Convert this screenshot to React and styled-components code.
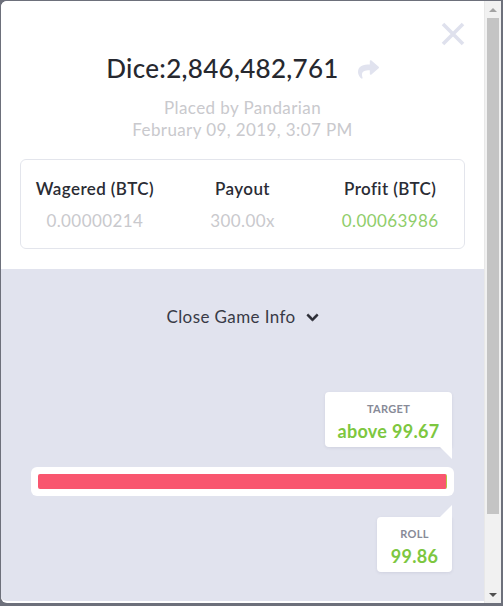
import React from "react";
import styled, { createGlobalStyle } from "styled-components";
import { FaShare, FaChevronDown } from "react-icons/fa";

const GlobalStyle = createGlobalStyle`
    html, body {
        margin: 0;
        padding: 0;
        background: #6d707b;
    }
    * {
        box-sizing: border-box;
    }
`;

const Frame = styled.div`
    display: flex;
    height: 606px;
    padding: 1px 2px 3px 1px;
    font-family: Lato, "Open Sans", sans-serif;
`;

const Panel = styled.div`
    position: relative;
    flex: 1;
    height: 602px;
    overflow: hidden;
    background: #ffffff;
    border-radius: 6px 0 0 6px;
    border-bottom: 2px solid #ffffff;
`;

/* fake window scrollbar, the headless browser hides the real one */
const ScrollBar = styled.div`
    width: 17px;
    height: 602px;
    display: flex;
    flex-direction: column;
    background: #f1f1f1;
    border-left: 1px solid #e8e8e8;
`;

const ScrollArrow = styled.div`
    height: 17px;
    display: flex;
    align-items: center;
    justify-content: center;
    &::before {
        content: "";
        border-left: 4px solid transparent;
        border-right: 4px solid transparent;
        ${({ $down }) =>
            $down
                ? "border-top: 4px solid #505050;"
                : "border-bottom: 4px solid #a3a3a3;"}
    }
`;

const ScrollThumb = styled.div`
    height: 496px;
    margin: 0 2px;
    background: #c4c4c4;
`;

const ScrollTrack = styled.div`
    flex: 1;
`;

const Header = styled.section`
    display: flex;
    flex-direction: column;
    align-items: center;
    padding: 50px 19px 20px;
    background: #ffffff;
`;

const CloseButton = styled.button`
    position: absolute;
    top: 20px;
    right: 18px;
    width: 26px;
    height: 26px;
    padding: 0;
    border: none;
    background: none;
    cursor: pointer;
    svg {
        display: block;
    }
`;

const TitleRow = styled.div`
    display: flex;
    align-items: center;
    gap: 19px;
`;

const Title = styled.h1`
    margin: 0;
    font-size: 26px;
    line-height: 34px;
    font-weight: 500;
    color: #26282f;
    letter-spacing: 0.3px;
`;

const ShareIcon = styled(FaShare)`
    color: #e1e3ef;
    font-size: 21px;
    margin-top: 2px;
`;

const Meta = styled.div`
    margin-top: 12px;
    text-align: center;
    font-size: 17px;
    line-height: 22px;
    letter-spacing: 0.4px;
    color: #c9c9cd;
`;

const StatsCard = styled.div`
    width: 100%;
    margin-top: 18px;
    display: grid;
    grid-template-columns: repeat(3, 1fr);
    padding: 18px 0 16px;
    border: 1px solid #e3e5ec;
    border-radius: 6px;
`;

const Stat = styled.div`
    display: flex;
    flex-direction: column;
    align-items: center;
    gap: 10px;
`;

const StatLabel = styled.div`
    font-size: 17px;
    line-height: 22px;
    font-weight: 600;
    letter-spacing: 0.4px;
    color: #2a2c34;
`;

const StatValue = styled.div`
    font-size: 17px;
    line-height: 22px;
    letter-spacing: 0.4px;
    color: ${({ $positive }) => ($positive ? "#8fcd6a" : "#c9c9cd")};
`;

const Details = styled.section`
    display: flex;
    flex-direction: column;
    align-items: center;
    padding: 37px 30px 120px;
    background: #e1e3ee;
`;

const ToggleButton = styled.button`
    display: flex;
    align-items: center;
    gap: 10px;
    padding: 0;
    border: none;
    background: none;
    font-family: inherit;
    font-size: 17px;
    line-height: 22px;
    letter-spacing: 0.4px;
    color: #383a46;
    cursor: pointer;
    svg {
        font-size: 13px;
        color: #2a2c34;
        stroke: #2a2c34;
        stroke-width: 30px;
    }
`;

const Slider = styled.div`
    width: 100%;
    margin-top: 64px;
    display: flex;
    flex-direction: column;
    align-items: flex-end;
`;

const Tip = styled.div`
    position: relative;
    width: ${({ $width }) => $width}px;
    margin-right: 2px;
    padding: 10px 0 0;
    height: 55px;
    display: flex;
    flex-direction: column;
    align-items: center;
    background: #ffffff;
    border-radius: ${({ $below }) => ($below ? "4px 0 4px 4px" : "4px 4px 0 4px")};
    box-shadow: 0 1px 3px rgba(80, 86, 120, 0.12);
    margin-bottom: ${({ $below }) => ($below ? 0 : 20)}px;
    margin-top: ${({ $below }) => ($below ? 21 : 0)}px;

    &::after {
        content: "";
        position: absolute;
        right: 0;
        width: 12px;
        height: 12px;
        background: #ffffff;
        ${({ $below }) =>
            $below
                ? "bottom: 100%; clip-path: polygon(100% 0, 100% 100%, 0 100%);"
                : "top: 100%; clip-path: polygon(0 0, 100% 0, 100% 100%);"}
    }
`;

const TipLabel = styled.div`
    font-size: 11px;
    line-height: 14px;
    font-weight: 700;
    color: #878a97;
    letter-spacing: 0.3px;
`;

const TipValue = styled.div`
    margin-top: 4px;
    font-size: 18px;
    line-height: 22px;
    font-weight: 700;
    letter-spacing: 0.3px;
    color: #7dc73f;
`;

const Track = styled.div`
    width: 100%;
    height: 29px;
    padding: 7px;
    background: #ffffff;
    border-radius: 6px;
`;

const Fill = styled.div`
    height: 15px;
    border-radius: 2px;
    background: linear-gradient(
        to right,
        #f9566f 0,
        #f9566f ${({ $target }) => $target}%,
        #b5c445 ${({ $target }) => $target}%,
        #b5c445 100%
    );
`;

const stats = [
    { label: "Wagered (BTC)", value: "0.00000214" },
    { label: "Payout", value: "300.00x" },
    { label: "Profit (BTC)", value: "0.00063986", positive: true },
];

export default function App() {
    return (
        <>
            <GlobalStyle />
            <Frame>
                <Panel>
                    <CloseButton aria-label="Close">
                        <svg width="26" height="26" viewBox="0 0 26 26">
                            <path
                                d="M3 3 L23 23 M23 3 L3 23"
                                stroke="#dfe1ed"
                                strokeWidth="3.6"
                                strokeLinecap="butt"
                            />
                        </svg>
                    </CloseButton>
                    <Header>
                        <TitleRow>
                            <Title>Dice:2,846,482,761</Title>
                            <ShareIcon />
                        </TitleRow>
                        <Meta>
                            <div>Placed by Pandarian</div>
                            <div>February 09, 2019, 3:07 PM</div>
                        </Meta>
                        <StatsCard>
                            {stats.map((s) => (
                                <Stat key={s.label}>
                                    <StatLabel>{s.label}</StatLabel>
                                    <StatValue $positive={s.positive}>{s.value}</StatValue>
                                </Stat>
                            ))}
                        </StatsCard>
                    </Header>
                    <Details>
                        <ToggleButton>
                            Close Game Info <FaChevronDown />
                        </ToggleButton>
                        <Slider>
                            <Tip $width={127}>
                                <TipLabel>TARGET</TipLabel>
                                <TipValue>above 99.67</TipValue>
                            </Tip>
                            <Track>
                                <Fill $target={99.67} />
                            </Track>
                            <Tip $width={75} $below>
                                <TipLabel>ROLL</TipLabel>
                                <TipValue>99.86</TipValue>
                            </Tip>
                        </Slider>
                    </Details>
                </Panel>
                <ScrollBar>
                    <ScrollArrow />
                    <ScrollThumb />
                    <ScrollTrack />
                    <ScrollArrow $down />
                </ScrollBar>
            </Frame>
        </>
    );
}
